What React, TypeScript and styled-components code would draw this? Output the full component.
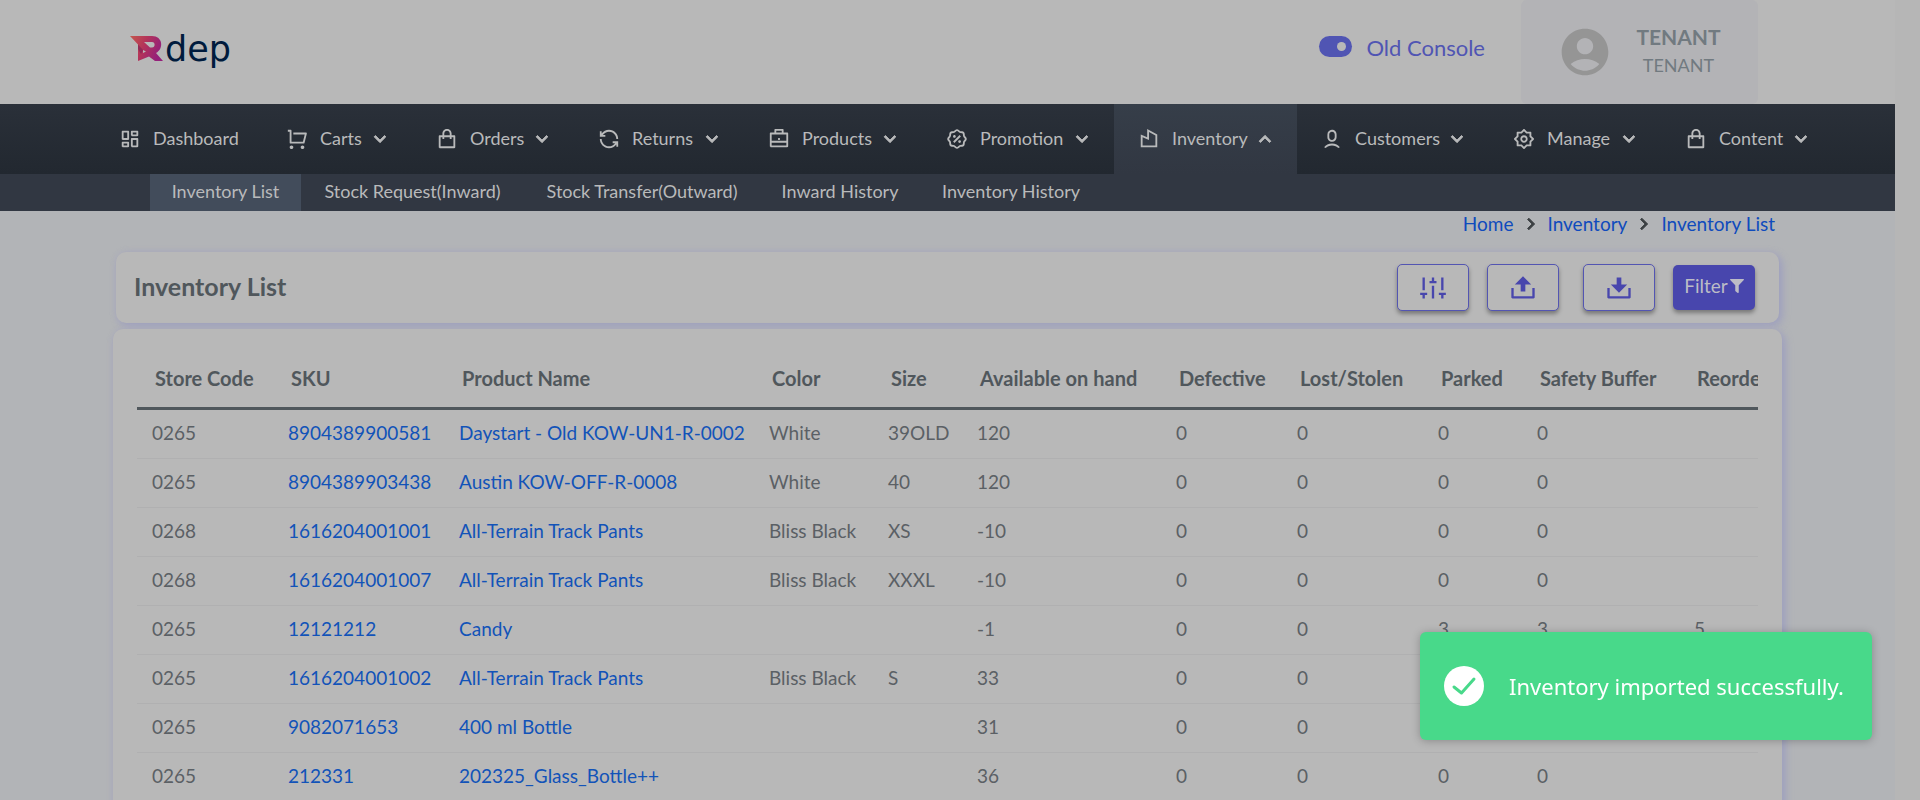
import React from "react";
import styled, { createGlobalStyle, css } from "styled-components";
import type { IconType } from "react-icons";
import {
  RiArrowDownSLine,
  RiArrowRightSLine,
  RiArrowUpSLine,
  RiBriefcaseLine,
  RiBuilding3Line,
  RiDashboardLine,
  RiDiscountPercentLine,
  RiDownload2Fill,
  RiLoopLeftLine,
  RiSettings2Line,
  RiShoppingBagLine,
  RiShoppingCartLine,
  RiSoundModuleLine,
  RiUpload2Fill,
  RiUser6Line,
} from "react-icons/ri";
import { MdAccountCircle } from "react-icons/md";
import { FaFilter } from "react-icons/fa";

const color = {
  page: "#b2b4b7",
  surface: "#b8b8b8",
  panel: "#b3b3b6",
  ink: "#50575c",
  text: "#5b6065",
  muted: "#717a80",
  link: "#1253b8",
  accent: "#4846ad",
  outline: "#5355b2",
  navText: "#b9babb",
  subnav: "#313742",
  success: "#48d98a",
};

const GlobalStyle = createGlobalStyle`
  *, *::before, *::after { box-sizing: border-box; }
  body {
    margin: 0;
    background: ${color.surface};
    color: ${color.text};
    font-family: Lato, "Noto Sans", sans-serif;
    font-size: 18px;
    line-height: 24px;
  }
  a { color: inherit; text-decoration: none; }
  button { font: inherit; cursor: pointer; }
`;

const Shell = styled.div`
  height: 100vh;
  overflow: hidden;
  padding-right: 25px;
  background: #b6b6b6;
`;

const Page = styled.div`
  min-height: 100%;
  background: ${color.page};
`;

const TopBar = styled.header`
  display: flex;
  align-items: stretch;
  height: 104px;
  padding: 0 137px 0 130px;
  background: ${color.surface};
`;

const Brand = styled.a`
  display: flex;
  align-items: center;
  gap: 1px;
  height: 98px;
  margin-right: auto;
  color: #001b3d;
  font-family: "DejaVu Sans", sans-serif;
  font-size: 35px;
  line-height: 35px;
`;

const ConsoleSwitch = styled.label`
  display: flex;
  align-items: center;
  gap: 14px;
  height: 96px;
  margin-right: 36px;
  color: #5055b3;
  font-size: 22px;
`;

const Switch = styled.input`
  appearance: none;
  display: flex;
  align-items: center;
  justify-content: flex-end;
  width: 33px;
  height: 21px;
  margin: 0 0 4px;
  padding: 6px;
  border-radius: 11px;
  background: #5055b3;

  &::after {
    content: "";
    width: 9px;
    height: 9px;
    border-radius: 50%;
    background: ${color.surface};
  }

  &:not(:checked) { justify-content: flex-start; }
`;

const Account = styled.div`
  display: flex;
  align-items: center;
  width: 237px;
  padding-left: 36px;
  border-radius: 6px;
  background: ${color.panel};
  color: ${color.muted};

  > svg { color: #959595; }
`;

const AccountText = styled.div`
  display: grid;
  flex: 1;
  gap: 4px;
  justify-items: center;
  padding: 0 14px 2px 0;

  strong { font-size: 21px; }
`;

const MainNav = styled.nav`
  display: flex;
  height: 70px;
  padding-left: 95px;
  background: linear-gradient(#2a3039, #222830);
  color: ${color.navText};
`;

const NavItem = styled.a<{ $width: number; $active?: boolean }>`
  display: flex;
  align-items: center;
  flex: 0 1 ${(p) => p.$width}px;
  padding: 0 21px 0 24px;
  ${(p) =>
    p.$active &&
    css`
      background: linear-gradient(#363e49, ${color.subnav});
    `}

  svg { flex: none; }
`;

const NavLabel = styled.span`
  flex: 1;
  margin-left: 12px;
  padding-bottom: 2px;
  white-space: nowrap;

  & + svg {
    width: 22px;
    height: 22px;
    stroke-width: 1;
  }
`;

const SubNav = styled.nav`
  display: flex;
  height: 37px;
  padding-left: 150px;
  background: ${color.subnav};
  color: ${color.navText};
`;

const SubNavItem = styled.a<{ $width: number; $active?: boolean }>`
  display: flex;
  align-items: center;
  justify-content: center;
  flex: 0 1 ${(p) => p.$width}px;
  padding-bottom: 3px;
  white-space: nowrap;
  background: ${(p) => (p.$active ? "#424c5b" : "transparent")};
`;

const Crumbs = styled.ol`
  display: flex;
  justify-content: flex-end;
  gap: 6px;
  height: 41px;
  margin: 0;
  padding: 1px 120px 0 0;
  list-style: none;
  color: #0f4bbd;
  font-size: 19px;

  li {
    display: flex;
    align-items: center;
    gap: 6px;
    height: 24px;
  }

  svg {
    color: #3b3f42;
    stroke-width: 1;
  }
`;

const Card = styled.section`
  border-radius: 10px;
  background: ${color.surface};
  box-shadow: 3px 3px 8px #9d9fbf, 0 0 6px #adadba;
`;

const TitleCard = styled(Card)`
  display: flex;
  align-items: center;
  margin: 0 116px 6px;
  height: 71px;
  padding: 0 24px 0 18px;
`;

const Title = styled.h1`
  margin: 0 auto 0 0;
  padding-bottom: 3px;
  color: ${color.ink};
  font-size: 25px;
  line-height: 28px;
`;

const buttonBase = css`
  display: flex;
  align-items: center;
  justify-content: center;
  border-radius: 5px;
  box-shadow: 0 3px 4px rgba(0, 0, 0, 0.35);
`;

const IconButton = styled.button`
  ${buttonBase}
  width: 72px;
  height: 47px;
  margin-right: 18px;
  padding: 0;
  border: 1px solid ${color.outline};
  background: ${color.surface};
  color: ${color.accent};
`;

const UploadButton = styled(IconButton)`
  margin-right: 24px;
`;

const FilterButton = styled.button`
  ${buttonBase}
  gap: 2px;
  width: 82px;
  height: 45px;
  padding: 0 0 3px;
  border: 0;
  background: ${color.accent};
  color: #bcbcc6;
  font-size: 19px;
`;

const TableCard = styled(Card)`
  margin: 0 113px;
  padding: 24px;
`;

const TableScroll = styled.div`
  overflow: hidden;
`;

const Table = styled.table`
  width: 1780px;
  border-collapse: separate;
  border-spacing: 0;
  table-layout: fixed;
  font-size: 19px;
  text-align: left;
  white-space: nowrap;
`;

const HeadCell = styled.th`
  height: 57px;
  padding: 0 0 4px 18px;
  border-bottom: 3px solid ${color.ink};
  color: ${color.ink};
  font-size: 20px;
`;

const Cell = styled.td`
  height: 49px;
  padding: 0 0 2px 15px;
  border-bottom: 1px solid #b0b0b1;

  a { color: ${color.link}; }
`;

const Toast = styled.div`
  position: fixed;
  right: 48px;
  bottom: 60px;
  display: flex;
  align-items: center;
  gap: 25px;
  width: 452px;
  height: 108px;
  padding: 0 24px;
  border-radius: 6px;
  background: ${color.success};
  box-shadow: 0 1px 8px rgba(0, 0, 0, 0.25);
  color: #fff;
  font-family: "Noto Sans", sans-serif;
  font-size: 22px;
  line-height: 32px;
  white-space: nowrap;

  svg { flex: none; }
`;

type NavEntry = { label: string; icon: IconType; width: number; active?: boolean; leaf?: boolean };

const navEntries: NavEntry[] = [
  { label: "Dashboard", icon: RiDashboardLine, width: 167, leaf: true },
  { label: "Carts", icon: RiShoppingCartLine, width: 150 },
  { label: "Orders", icon: RiShoppingBagLine, width: 162 },
  { label: "Returns", icon: RiLoopLeftLine, width: 170 },
  { label: "Products", icon: RiBriefcaseLine, width: 178 },
  { label: "Promotion", icon: RiDiscountPercentLine, width: 192 },
  { label: "Inventory", icon: RiBuilding3Line, width: 183, active: true },
  { label: "Customers", icon: RiUser6Line, width: 192 },
  { label: "Manage", icon: RiSettings2Line, width: 172 },
  { label: "Content", icon: RiShoppingBagLine, width: 172 },
];

const subNavEntries = [
  { label: "Inventory List", width: 151, active: true },
  { label: "Stock Request(Inward)", width: 223 },
  { label: "Stock Transfer(Outward)", width: 236 },
  { label: "Inward History", width: 160 },
  { label: "Inventory History", width: 182 },
];

const columns = [
  { label: "Store Code", width: 136 },
  { label: "SKU", width: 171 },
  { label: "Product Name", width: 310 },
  { label: "Color", width: 119 },
  { label: "Size", width: 89 },
  { label: "Available on hand", width: 199 },
  { label: "Defective", width: 121 },
  { label: "Lost/Stolen", width: 141 },
  { label: "Parked", width: 99 },
  { label: "Safety Buffer", width: 157 },
  { label: "Reorder Point", width: 238 },
];

const rows = [
  ["0265", "8904389900581", "Daystart - Old KOW-UN1-R-0002", "White", "39OLD", "120", "0", "0", "0", "0", ""],
  ["0265", "8904389903438", "Austin KOW-OFF-R-0008", "White", "40", "120", "0", "0", "0", "0", ""],
  ["0268", "1616204001001", "All-Terrain Track Pants", "Bliss Black", "XS", "-10", "0", "0", "0", "0", ""],
  ["0268", "1616204001007", "All-Terrain Track Pants", "Bliss Black", "XXXL", "-10", "0", "0", "0", "0", ""],
  ["0265", "12121212", "Candy", "", "", "-1", "0", "0", "3", "3", "5"],
  ["0265", "1616204001002", "All-Terrain Track Pants", "Bliss Black", "S", "33", "0", "0", "0", "0", ""],
  ["0265", "9082071653", "400 ml Bottle", "", "", "31", "0", "0", "0", "0", ""],
  ["0265", "212331", "202325_Glass_Bottle++", "", "", "36", "0", "0", "0", "0", ""],
];

const BrandMark = () => (
  <svg width="34" height="26" viewBox="0 0 34 26" aria-hidden="true">
    <defs>
      <linearGradient id="mark" x1="0" x2="1" y1="0" y2="0.3">
        <stop offset="0" stopColor="#c4574c" />
        <stop offset="0.5" stopColor="#b3335a" />
        <stop offset="1" stopColor="#94207a" />
      </linearGradient>
    </defs>
    <path
      fill="url(#mark)"
      fillRule="evenodd"
      d="M0 0H22C33 0 34 13 26 17L33 25H25L19 20.500L8 25V8.500ZM14 6L20 11.500H22C25.500 11.500 25.500 6 22 6ZM13 14V17L16 15.500Z"
    />
    <path fill="#7c1f55" opacity="0.6" d="M8 8.500L13 14L11 18L8 13Z" />
  </svg>
);

const CheckMark = () => (
  <svg width="40" height="40" viewBox="0 0 40 40" aria-hidden="true">
    <circle cx="20" cy="20" r="20" fill="#fff" />
    <path
      d="M10 21L17.500 27L30 13"
      fill="none"
      stroke={color.success}
      strokeWidth="3"
      strokeLinecap="round"
      strokeLinejoin="round"
    />
  </svg>
);

export default function App() {
  return (
    <Shell>
      <GlobalStyle />
      <Page>
        <TopBar>
          <Brand href="#">
            <BrandMark />
            dep
          </Brand>
          <ConsoleSwitch htmlFor="old-console">
            <Switch id="old-console" type="checkbox" defaultChecked />
            Old Console
          </ConsoleSwitch>
          <Account>
            <MdAccountCircle size={56} />
            <AccountText>
              <strong>TENANT</strong>
              <span>TENANT</span>
            </AccountText>
          </Account>
        </TopBar>

        <MainNav aria-label="Main">
          {navEntries.map(({ label, icon: Icon, width, active, leaf }) => (
            <NavItem key={label} href="#" $width={width} $active={active}>
              <Icon size={22} />
              <NavLabel>{label}</NavLabel>
              {!leaf && (active ? <RiArrowUpSLine /> : <RiArrowDownSLine />)}
            </NavItem>
          ))}
        </MainNav>

        <SubNav aria-label="Inventory">
          {subNavEntries.map(({ label, width, active }) => (
            <SubNavItem key={label} href="#" $width={width} $active={active}>
              {label}
            </SubNavItem>
          ))}
        </SubNav>

        <main>
          <Crumbs>
            <li>
              <a href="#">Home</a>
              <RiArrowRightSLine size={22} />
            </li>
            <li>
              <a href="#">Inventory</a>
              <RiArrowRightSLine size={22} />
            </li>
            <li>
              <a href="#">Inventory List</a>
            </li>
          </Crumbs>

          <TitleCard>
            <Title>Inventory List</Title>
            <IconButton type="button" aria-label="Adjust columns">
              <RiSoundModuleLine size={28} />
            </IconButton>
            <UploadButton type="button" aria-label="Upload">
              <RiUpload2Fill size={28} />
            </UploadButton>
            <IconButton type="button" aria-label="Download">
              <RiDownload2Fill size={28} />
            </IconButton>
            <FilterButton type="button">
              Filter
              <FaFilter size={14} />
            </FilterButton>
          </TitleCard>

          <TableCard>
            <TableScroll>
              <Table>
                <colgroup>
                  {columns.map((c) => (
                    <col key={c.label} width={c.width} />
                  ))}
                </colgroup>
                <thead>
                  <tr>
                    {columns.map((c) => (
                      <HeadCell key={c.label} scope="col">
                        {c.label}
                      </HeadCell>
                    ))}
                  </tr>
                </thead>
                <tbody>
                  {rows.map((row) => (
                    <tr key={row[1]}>
                      {row.map((value, i) => (
                        <Cell key={columns[i].label}>
                          {i === 1 || i === 2 ? <a href="#">{value}</a> : value}
                        </Cell>
                      ))}
                    </tr>
                  ))}
                </tbody>
              </Table>
            </TableScroll>
          </TableCard>
        </main>
      </Page>

      <Toast role="status">
        <CheckMark />
        Inventory imported successfully.
      </Toast>
    </Shell>
  );
}
